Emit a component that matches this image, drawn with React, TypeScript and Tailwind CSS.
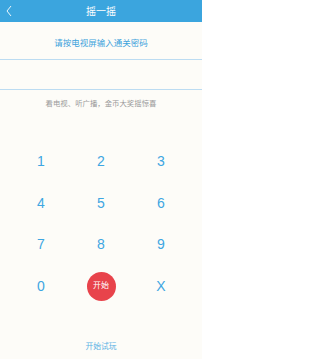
export default function App() {
  const keys = ["1", "2", "3", "4", "5", "6", "7", "8", "9"];

  return (
    <div
      className="w-[202px] h-[359px] bg-[#fdfcf8] flex flex-col overflow-hidden"
      style={{ fontFamily: '"Liberation Sans", "Noto Sans CJK SC", sans-serif' }}
    >
      {/* header */}
      <div className="h-[22px] bg-[#3ba5de] flex items-center relative shrink-0">
        <svg className="absolute left-[6px] top-[5px]" width="6" height="12" viewBox="0 0 6 12">
          <path d="M5 1 L1 6 L5 11" fill="none" stroke="#ffffff" strokeWidth="0.9" />
        </svg>
        <div className="flex-1 text-center text-white text-[10px] leading-none pt-[1px]">摇一摇</div>
      </div>

      <div className="h-[37px] flex items-center justify-center pt-[5px] text-[8.5px] text-[#3ea3dc]">
        请按电视屏输入通关密码
      </div>
      <div className="h-px bg-[#bcdcf2]" />
      <div className="h-[29px]" />
      <div className="h-px bg-[#bcdcf2]" />
      <div className="h-[27px] flex items-center justify-center text-[7.4px] text-[#9a9a9a]">
        看电视、听广播，金币大奖摇惊喜
      </div>

      {/* keypad */}
      <div className="w-[180px] mx-auto mt-[24px] grid grid-cols-3">
        {keys.map((k) => (
          <div key={k} className="h-[41.5px] flex items-center justify-center text-[14px] text-[#3ea6e2]">
            {k}
          </div>
        ))}
        <div className="h-[41.5px] flex items-center justify-center text-[14px] text-[#3ea6e2]">0</div>
        <div className="h-[41.5px] flex items-center justify-center">
          <div className="w-[29px] h-[29px] rounded-full bg-[#e8434b] flex items-center justify-center text-white text-[8px]">
            开始
          </div>
        </div>
        <div className="h-[41.5px] flex items-center justify-center text-[14px] text-[#3ea6e2]">X</div>
      </div>

      <div className="mt-[34px] text-center text-[7.8px] text-[#5ab2e4]">开始试玩</div>
    </div>
  );
}
